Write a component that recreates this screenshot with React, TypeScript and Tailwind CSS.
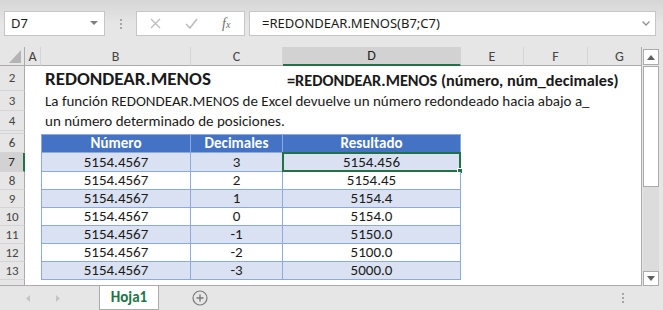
import React from "react";

const COLS = [16, 150, 92, 178, 63, 64, 64];
const LETTERS = ["A", "B", "C", "D", "E", "F", "G"];

const data = [
  ["3", "5154.456"],
  ["2", "5154.45"],
  ["1", "5154.4"],
  ["0", "5154.0"],
  ["-1", "5150.0"],
  ["-2", "5100.0"],
  ["-3", "5000.0"],
];

function RowHead({ n, active }: { n: string; active?: boolean }) {
  return (
    <div
      className={
        "w-[25px] shrink-0 flex items-center justify-center text-[13px] border-b border-[#d4d4d4] " +
        (active
          ? "bg-[#d2d2d2] text-[#222] border-r-2 border-r-[#217346]"
          : "bg-[#e6e6e6] text-[#444] border-r border-r-[#ababab]")
      }
    >
      {n}
    </div>
  );
}

function Dots() {
  return (
    <div className="flex flex-col gap-[2px]">
      <div className="w-[2px] h-[2px] bg-[#a6a6a6]" />
      <div className="w-[2px] h-[2px] bg-[#a6a6a6]" />
      <div className="w-[2px] h-[2px] bg-[#a6a6a6]" />
    </div>
  );
}

export default function App() {
  return (
    <div className="w-[663px] h-[310px] overflow-hidden bg-[#e6e6e6] font-[Carlito,Lato,sans-serif] text-[#1a1a1a]">
      {/* formula bar */}
      <div className="h-[47px] flex items-start pt-[11px] pl-[4px] bg-gradient-to-b from-[#d6d6d6] via-[#e6e6e6] to-[#e6e6e6] font-['Noto_Sans',sans-serif] text-[13px]">
        <div className="w-[101px] h-[25px] bg-white border border-[#c6c6c6] flex items-center pl-[6px] pr-[6px] justify-between">
          <span>D7</span>
          <svg width="8" height="5" viewBox="0 0 8 5">
            <path d="M0 0 L8 0 L4 4 Z" fill="#808080" />
          </svg>
        </div>
        <div className="w-[31px] h-[25px] flex items-center justify-center">
          <Dots />
        </div>
        <div className="w-[109px] h-[25px] bg-white border border-[#c6c6c6] flex items-center">
          <svg className="ml-[13px]" width="11" height="11" viewBox="0 0 11 11">
            <path d="M1 1 L10 10 M10 1 L1 10" stroke="#bdbdbd" strokeWidth="1.3" />
          </svg>
          <svg className="ml-[24px]" width="13" height="11" viewBox="0 0 13 11">
            <path d="M1 6 L5 10 L12 1" stroke="#bdbdbd" strokeWidth="1.6" fill="none" />
          </svg>
          <span className="ml-[24px] font-['Liberation_Serif',serif] italic text-[#707070] text-[14px] leading-none">
            f<span className="text-[10px]">x</span>
          </span>
        </div>
        <div className="ml-[4px] w-[407px] h-[25px] bg-white border border-[#c6c6c6] flex items-center pl-[12px] pr-[5px] justify-between">
          <span>=REDONDEAR.MENOS(B7;C7)</span>
          <svg width="8" height="5" viewBox="0 0 8 5">
            <path d="M0.5 0.5 L4 4 L7.5 0.5" stroke="#909090" strokeWidth="1.3" fill="none" />
          </svg>
        </div>
      </div>

      {/* sheet */}
      <div className="flex h-[239px]">
        <div className="w-[642px] overflow-hidden bg-white border-r border-b border-[#ababab]">
          {/* column headers */}
          <div className="flex h-[19px]">
            <div className="w-[25px] shrink-0 relative bg-[#e6e6e6] border-r border-b border-[#ababab]">
              <svg className="absolute right-[3px] bottom-[2px]" width="12" height="13" viewBox="0 0 12 13">
                <path d="M12 0 L12 13 L0 13 Z" fill="#b4b4b4" />
              </svg>
            </div>
            {LETTERS.map((l, i) => (
              <div
                key={l}
                style={{ width: COLS[i] }}
                className={
                  "shrink-0 flex items-center justify-center text-[14px] border-r border-r-[#d4d4d4] " +
                  (l === "D"
                    ? "bg-[#d2d2d2] text-[#222] border-b-2 border-b-[#217346]"
                    : "bg-[#e6e6e6] text-[#444] border-b border-b-[#ababab]")
                }
              >
                {l}
              </div>
            ))}
          </div>

          {/* row 2 */}
          <div className="flex h-[25px] overflow-hidden">
            <RowHead n="2" />
            <div className="w-[16px] shrink-0" />
            <div className="w-[242px] shrink-0 pl-[4px] flex items-end pb-[1px] font-bold text-[19px] leading-[22px] whitespace-nowrap">
              REDONDEAR.MENOS
            </div>
            <div className="pl-[4px] flex items-end font-bold text-[16.3px] leading-[22px] whitespace-nowrap">
              =REDONDEAR.MENOS (número, núm_decimales)
            </div>
          </div>

          {/* row 3 */}
          <div className="flex h-[20px]">
            <RowHead n="3" />
            <div className="w-[16px] shrink-0" />
            <div className="pl-[4px] flex items-end pb-[1px] text-[15px] leading-[18px] whitespace-nowrap">
              La función REDONDEAR.MENOS de Excel devuelve un número redondeado hacia abajo a_
            </div>
          </div>

          {/* row 4 */}
          <div className="flex h-[20px]">
            <RowHead n="4" />
            <div className="w-[16px] shrink-0" />
            <div className="pl-[4px] flex items-end pb-[1px] text-[15px] leading-[18px] whitespace-nowrap">
              un número determinado de posiciones.
            </div>
          </div>

          {/* row 5 (hidden) */}
          <div className="flex h-[3px]">
            <div className="w-[25px] shrink-0 bg-[#e6e6e6] border-r border-r-[#ababab] border-b border-[#d4d4d4]" />
          </div>

          {/* row 6: table header */}
          <div className="flex h-[19px]">
            <RowHead n="6" />
            <div className="w-[16px] shrink-0" />
            {["Número", "Decimales", "Resultado"].map((h, i) => (
              <div
                key={h}
                style={{ width: COLS[i + 1] }}
                className={
                  "shrink-0 flex items-center justify-center bg-[#4472c4] text-white font-bold text-[15px] border-t border-r border-b border-[#8ea9db] " +
                  (i === 0 ? "border-l" : "")
                }
              >
                {h}
              </div>
            ))}
          </div>

          {/* data rows */}
          {data.map(([dec, res], r) => {
            const bg = r % 2 === 0 ? "bg-[#d9e1f2]" : "bg-white";
            const active = r === 0;
            return (
              <div key={r} className={"flex " + (r === 0 ? "h-[19px]" : "h-[18px]")}>
                <RowHead n={String(r + 7)} active={active} />
                <div className="w-[16px] shrink-0" />
                <div className={"w-[150px] shrink-0 flex items-center justify-center text-[15px] border-l border-r border-b border-[#8ea9db] " + bg}>
                  5154.4567
                </div>
                <div className={"w-[92px] shrink-0 flex items-center justify-center text-[15px] border-r border-b border-[#8ea9db] " + bg}>
                  {dec}
                </div>
                <div className={"relative w-[178px] shrink-0 flex items-center justify-center text-[15px] border-r border-b border-[#8ea9db] " + bg}>
                  {res}
                  {active && (
                    <div className="absolute -top-[1px] -left-[1px] -right-[1px] -bottom-[1px] border-2 border-[#217346]">
                      <div className="absolute -right-[4px] -bottom-[4px] w-[6px] h-[6px] bg-[#217346] border border-white" />
                    </div>
                  )}
                </div>
              </div>
            );
          })}

          {/* row 14 partial */}
          <div className="flex h-[10px]">
            <div className="w-[25px] shrink-0 bg-[#e6e6e6] border-r border-r-[#ababab]" />
          </div>
        </div>

        {/* vertical scrollbar */}
        <div className="ml-[1px] w-[16px] flex flex-col pt-[2px]">
          <div className="h-[16px] bg-white border border-[#ababab] flex items-center justify-center">
            <svg width="8" height="5" viewBox="0 0 8 5">
              <path d="M0 5 L8 5 L4 0 Z" fill="#606060" />
            </svg>
          </div>
          <div className="h-[121px] mt-[1px] bg-white border border-[#ababab]" />
          <div className="flex-1 bg-[#dcdcdc]" />
          <div className="h-[15px] bg-white border border-[#ababab] flex items-center justify-center">
            <svg width="8" height="5" viewBox="0 0 8 5">
              <path d="M0 0 L8 0 L4 5 Z" fill="#606060" />
            </svg>
          </div>
        </div>
      </div>

      {/* sheet tabs */}
      <div className="h-[24px] flex items-stretch">
        <div className="w-[99px] flex items-center">
          <svg className="ml-[26px]" width="4" height="7" viewBox="0 0 4 7">
            <path d="M4 0 L4 7 L0 3.5 Z" fill="#c4c4c4" />
          </svg>
          <svg className="ml-[26px]" width="4" height="7" viewBox="0 0 4 7">
            <path d="M0 0 L0 7 L4 3.5 Z" fill="#c4c4c4" />
          </svg>
        </div>
        <div className="w-[60px] bg-white border-l border-r border-b border-[#ababab] flex items-center justify-center text-[#217346] font-bold text-[15px]">
          Hoja1
        </div>
        <div className="ml-[33px] flex items-center">
          <svg width="16" height="16" viewBox="0 0 16 16">
            <circle cx="8" cy="8" r="7" stroke="#7a7a7a" strokeWidth="1.2" fill="none" />
            <path d="M8 4.5 L8 11.5 M4.5 8 L11.5 8" stroke="#7a7a7a" strokeWidth="1.4" />
          </svg>
        </div>
        <div className="ml-[414px] flex items-center">
          <Dots />
        </div>
      </div>
    </div>
  );
}
